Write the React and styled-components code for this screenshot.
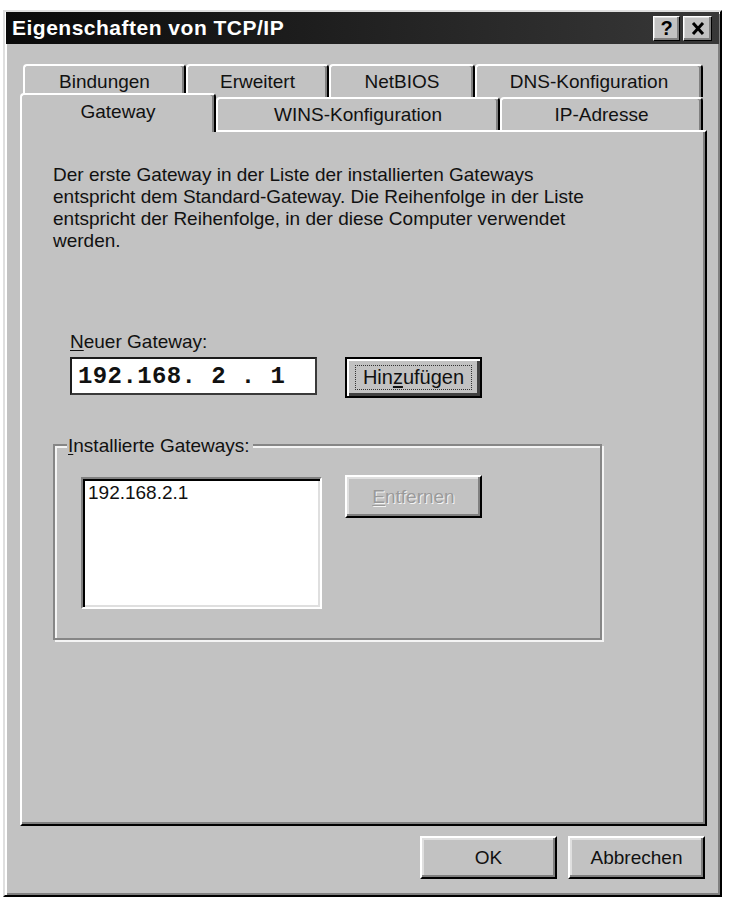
import styled, { createGlobalStyle } from "styled-components";

const GlobalStyle = createGlobalStyle`
  html, body {
    margin: 0;
    background: #fff;
  }
  body {
    font-family: "Liberation Sans", Arial, sans-serif;
    font-size: 19px;
    color: #111;
  }
`;

const Window = styled.div`
  box-sizing: border-box;
  width: 719px;
  height: 887px;
  margin: 10px 0 0 3px;
  padding: 0 1px;
  background: #c2c2c2;
  border: 2px solid;
  border-color: #dfdfdf #000 #000 #dfdfdf;
  box-shadow: inset 2px 2px #fff, inset -2px -2px #808080;
  display: flex;
  flex-direction: column;
`;

const TitleBar = styled.div`
  height: 32px;
  display: flex;
  align-items: center;
  justify-content: space-between;
  padding: 0 7px 0 6px;
  background: linear-gradient(90deg, #0a0a0a, #383838);
`;

const Title = styled.span`
  color: #fff;
  font-weight: 700;
  font-size: 21px;
  letter-spacing: 0.5px;
`;

const TitleButtons = styled.div`
  display: flex;
  gap: 3px;
`;

const TitleButton = styled.div`
  box-sizing: border-box;
  width: ${(p) => p.$w}px;
  height: 25px;
  display: flex;
  align-items: center;
  justify-content: center;
  background: #c2c2c2;
  border: 1px solid;
  border-color: #fff #000 #000 #fff;
  box-shadow: inset -2px -2px #808080, inset 1px 1px #dfdfdf;
  font-weight: 700;
  font-size: 20px;
  color: #000;
`;

const Body = styled.div`
  padding: 20px 12px 0 14px;
`;

const TabRow = styled.div`
  display: flex;
  align-items: flex-start;
  height: 33px;
  padding-left: ${(p) => p.$indent}px;
`;

const Tab = styled.div`
  box-sizing: border-box;
  width: ${(p) => p.$w}px;
  height: ${(p) => (p.$active ? 39 : 33)}px;
  margin-top: ${(p) => (p.$active ? -4 : 0)}px;
  padding-bottom: ${(p) => (p.$active ? 3 : 0)}px;
  position: relative;
  z-index: ${(p) => (p.$active ? 2 : 0)};
  display: flex;
  align-items: center;
  justify-content: center;
  background: #c2c2c2;
  border: 2px solid;
  border-bottom: none;
  border-color: #fff #000 transparent #fff;
  border-radius: 4px 4px 0 0;
  box-shadow: inset -2px 0 #808080;
`;

const Panel = styled.div`
  box-sizing: border-box;
  height: 696px;
  padding: 32px 0 0 31px;
  border: 2px solid;
  border-color: #fff #000 #000 #fff;
  box-shadow: inset -2px -2px #808080;
`;

const Description = styled.p`
  margin: 0;
  line-height: 22px;
`;

const Field = styled.div`
  margin: 79px 0 0 17px;
`;

const Label = styled.div`
  line-height: 22px;
`;

const Key = styled.span`
  text-decoration: underline;
  text-underline-offset: 2px;
`;

const FieldRow = styled.div`
  display: flex;
  align-items: flex-start;
  gap: 28px;
  margin-top: 4px;
`;

const AddressInput = styled.div`
  box-sizing: border-box;
  width: 247px;
  height: 38px;
  padding-left: 6px;
  display: flex;
  align-items: center;
  background: #fff;
  border: 2px solid;
  border-color: #1c1c1c #3a3a3a #3a3a3a #1c1c1c;
  font-family: "Liberation Mono", "Courier New", monospace;
  font-weight: 700;
  font-size: 24px;
  letter-spacing: 0.4px;
  white-space: pre;
  color: #111;
`;

const Button = styled.div`
  box-sizing: border-box;
  width: 137px;
  height: ${(p) => p.$h}px;
  display: flex;
  align-items: center;
  justify-content: center;
  background: #c2c2c2;
  border: 2px solid;
  border-color: ${(p) => (p.$default ? "#000" : "#fff #000 #000 #fff")};
  box-shadow: ${(p) =>
    p.$default
      ? "inset 2px 2px #fff, inset -3px -3px #404040"
      : "inset -2px -2px #808080, inset 2px 2px #dfdfdf"};
  color: ${(p) => (p.$disabled ? "#9a9a9a" : "#111")};
  text-shadow: ${(p) => (p.$disabled ? "1px 1px #f4f4f4" : "none")};
`;

const FocusRing = styled.span`
  box-sizing: border-box;
  width: 117px;
  height: 25px;
  display: flex;
  align-items: center;
  justify-content: center;
  border: 1px dotted #333;
  font-size: 20px;
`;

const GroupBox = styled.div`
  box-sizing: border-box;
  position: relative;
  width: 549px;
  height: 196px;
  margin-top: 46px;
  padding: 31px 0 0 26px;
  display: flex;
  align-items: flex-start;
  gap: 23px;
  border: 2px solid #868686;
  box-shadow: inset 2px 2px #f4f4f4, 2px 2px #f4f4f4;
`;

const GroupLegend = styled.span`
  position: absolute;
  top: -11px;
  left: 12px;
  padding: 0 3px 0 1px;
  line-height: 22px;
  background: #c2c2c2;
`;

const ListBox = styled.div`
  box-sizing: border-box;
  width: 241px;
  height: 132px;
  padding: 3px 5px;
  line-height: 22px;
  background: #fff;
  border: 2px solid;
  border-color: #808080 #fff #fff #808080;
  box-shadow: inset 2px 2px #000, inset -2px -2px #dfdfdf;
`;

const Shifted = styled.div`
  margin-top: -2px;
`;

const Footer = styled.div`
  display: flex;
  justify-content: flex-end;
  gap: 11px;
  margin: 10px 2px 0 0;
`;

const CloseGlyph = () => (
  <svg width="14" height="13" viewBox="0 0 14 13">
    <path d="M2 1 L12 12 M12 1 L2 12" stroke="#000" strokeWidth="3" />
  </svg>
);

export default function App() {
  return (
    <>
      <GlobalStyle />
      <Window>
        <TitleBar>
          <Title>Eigenschaften von TCP/IP</Title>
          <TitleButtons>
            <TitleButton $w={27}>?</TitleButton>
            <TitleButton $w={29}>
              <CloseGlyph />
            </TitleButton>
          </TitleButtons>
        </TitleBar>
        <Body>
          <TabRow $indent={3}>
            <Tab $w={163}>Bindungen</Tab>
            <Tab $w={143}>Erweitert</Tab>
            <Tab $w={146}>NetBIOS</Tab>
            <Tab $w={228}>DNS-Konfiguration</Tab>
          </TabRow>
          <TabRow $indent={0}>
            <Tab $w={196} $active>
              Gateway
            </Tab>
            <Tab $w={284}>WINS-Konfiguration</Tab>
            <Tab $w={203}>IP-Adresse</Tab>
          </TabRow>
          <Panel>
            <Description>
              Der erste Gateway in der Liste der installierten Gateways
              <br />
              entspricht dem Standard-Gateway. Die Reihenfolge in der Liste
              <br />
              entspricht der Reihenfolge, in der diese Computer verwendet
              <br />
              werden.
            </Description>
            <Field>
              <Label>
                <Key>N</Key>euer Gateway:
              </Label>
              <FieldRow>
                <AddressInput>192.168. 2 . 1</AddressInput>
                <Button $h={41} $default>
                  <FocusRing>
                    Hin<Key>z</Key>ufügen
                  </FocusRing>
                </Button>
              </FieldRow>
            </Field>
            <GroupBox>
              <GroupLegend>
                <Key>I</Key>nstallierte Gateways:
              </GroupLegend>
              <ListBox>192.168.2.1</ListBox>
              <Shifted>
                <Button $h={43} $disabled>
                  <span>
                    <Key>E</Key>ntfernen
                  </span>
                </Button>
              </Shifted>
            </GroupBox>
          </Panel>
          <Footer>
            <Button $h={43}>OK</Button>
            <Button $h={43}>Abbrechen</Button>
          </Footer>
        </Body>
      </Window>
    </>
  );
}
